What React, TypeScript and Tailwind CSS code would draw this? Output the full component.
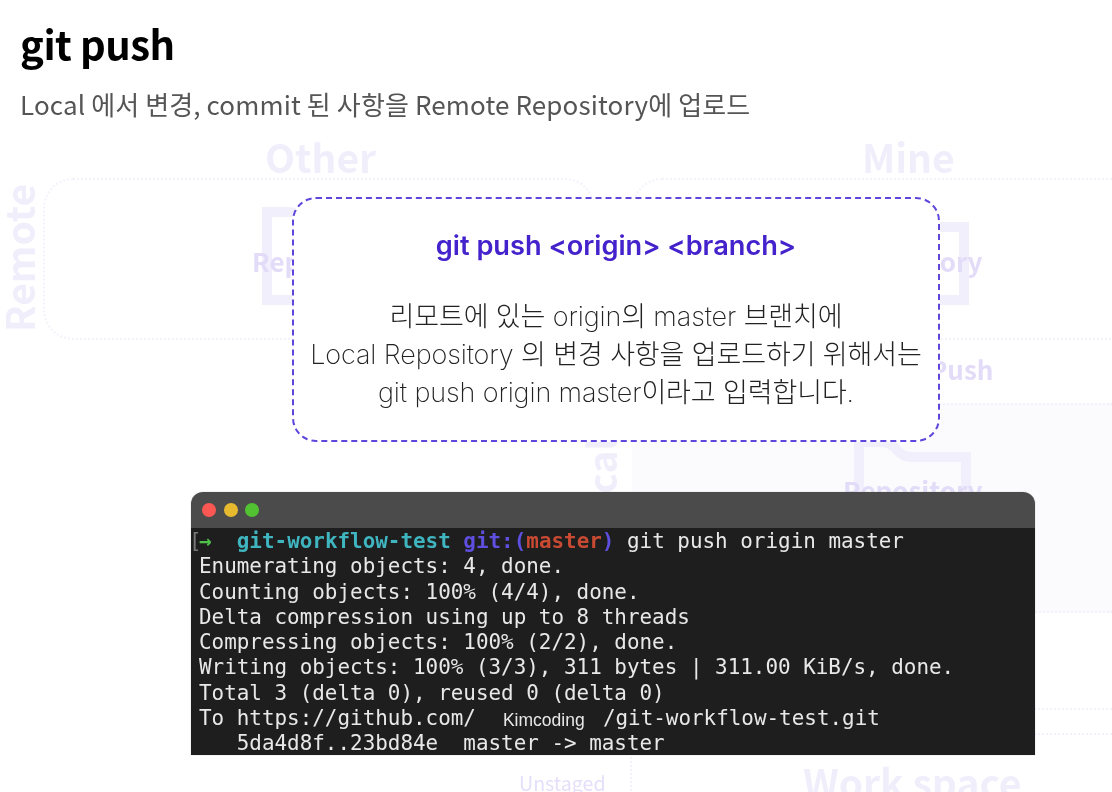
const cjk = "font-['Noto_Sans_CJK_KR','Noto_Sans',sans-serif]";

function Folder({ className }: { className: string }) {
  return (
    <svg className={className} viewBox="0 0 117 98" fill="none" stroke="#f2effc" strokeWidth="10">
      <path d="M5 93V5H26Q36 5 42 12Q48 20 58 20H112V93Z" />
    </svg>
  );
}

function Canvas() {
  const label = `absolute ${cjk} font-bold whitespace-nowrap`;
  return (
    <div className="absolute inset-0 overflow-hidden">
      <div className="absolute left-[43px] top-[178px] w-[552px] h-[162px] rounded-[30px] border-2 border-dotted border-[#f3f2fb]" />
      <div className="absolute left-[632px] top-[178px] w-[520px] h-[162px] rounded-[30px] border-2 border-dotted border-[#f3f2fb]" />
      <div className="absolute left-[632px] top-[403px] w-[480px] h-[210px] bg-[#fbfbfe] border-t-2 border-b-2 border-dotted border-[#f3f2fb]" />
      <div className="absolute left-[630px] top-[613px] w-[482px] h-[95px] border-l-2 border-dotted border-[#f3f2fb]" />
      <div className="absolute left-[630px] top-[708px] w-[482px] border-t-2 border-dotted border-[#f3f2fb]" />
      <div className="absolute left-[630px] top-[733px] w-[482px] h-[70px] border-t-2 border-l-2 border-dotted border-[#f3f2fb]" />

      <span className={`${label} left-[265px] top-[130px] text-[39px] leading-[52px] text-[#f1eefc]`}>Other</span>
      <span className={`${label} left-[862px] top-[130px] text-[39px] leading-[52px] text-[#f1eefc]`}>Mine</span>
      <span className={`${label} left-[803px] top-[755px] text-[39px] leading-[52px] text-[#f1eefc]`}>Work space</span>
      <span className={`${label} left-[-56px] top-[232px] w-[148px] text-center -rotate-90 text-[39px] leading-[52px] text-[#f1eefc]`}>Remote</span>
      <span className={`${label} left-[560px] top-[474px] w-[80px] text-center -rotate-90 text-[39px] leading-[52px] text-[#f1eefc]`}>Local</span>

      <Folder className="absolute left-[262px] top-[207px] w-[117px] h-[98px]" />
      <Folder className="absolute left-[852px] top-[207px] w-[117px] h-[98px]" />
      <Folder className="absolute left-[854px] top-[437px] w-[117px] h-[98px]" />

      <span className={`${label} left-[252px] top-[242px] text-[26px] leading-[38px] text-[#e3dcf8]`}>Repository</span>
      <span className={`${label} left-[843px] top-[242px] text-[26px] leading-[38px] text-[#e3dcf8]`}>Repository</span>
      <span className={`${label} left-[843px] top-[471px] text-[26px] leading-[38px] text-[#e3dcf8]`}>Repository</span>
      <span className={`${label} left-[930px] top-[350px] text-[26px] leading-[38px] text-[#e3dcf8]`}>Push</span>
      <span className={`absolute ${cjk} left-[519px] top-[769px] text-[19.6px] leading-[28px] text-[#e5dffa]`}>Unstaged</span>
    </div>
  );
}

function Terminal() {
  const lines = [
    "Enumerating objects: 4, done.",
    "Counting objects: 100% (4/4), done.",
    "Delta compression using up to 8 threads",
    "Compressing objects: 100% (2/2), done.",
    "Writing objects: 100% (3/3), 311 bytes | 311.00 KiB/s, done.",
    "Total 3 (delta 0), reused 0 (delta 0)",
  ];
  return (
    <div className="ml-[191px] mt-[50px] w-[844px] overflow-hidden rounded-t-xl shadow-[0_0_1px_#888]">
      <div className="h-9 bg-[#4b4b4b] flex items-center gap-[7.5px] pl-[11px]">
        <span className="w-[14px] h-[14px] rounded-full bg-[#fc5753]" />
        <span className="w-[14px] h-[14px] rounded-full bg-[#e6b92f]" />
        <span className="w-[14px] h-[14px] rounded-full bg-[#52c233]" />
      </div>
      <div className="h-[227px] overflow-hidden bg-[#1e1e1e] pl-2 pt-px font-['DejaVu_Sans_Mono',monospace] text-[20.92px] leading-[25.25px] text-[#e8e8e8] whitespace-pre">
        <div className="h-[25.25px]">
          <span className="-ml-[10px] -mr-[2.6px] text-[#777]">[</span>
          <span className="font-bold text-[#4fc04a]">→</span>
          {"  "}
          <span className="font-bold text-[#3fb5c0]">git-workflow-test</span>
          <span className="font-bold text-[#5f4fe0]"> git:(</span>
          <span className="font-bold text-[#c94a33]">master</span>
          <span className="font-bold text-[#5f4fe0]">)</span>
          {" git push origin master"}
        </div>
        {lines.map((l) => (
          <div key={l}>{l}</div>
        ))}
        <div className="flex h-[25.25px]">
          <span>To https://github.com/</span>
          <span className="w-[127px] pl-[27px] font-['Liberation_Sans',sans-serif] text-[17.5px] leading-[28px]">Kimcoding</span>
          <span>/git-workflow-test.git</span>
        </div>
        <div>{"   5da4d8f..23bd84e  master -> master"}</div>
      </div>
    </div>
  );
}

export default function App() {
  return (
    <div className="relative w-[1112px] h-[792px] overflow-hidden bg-white">
      <div className="absolute inset-0 blur-[0.4px]">
        <Canvas />
        <div className="relative">
          <header className={`pl-5 pt-[13px] ${cjk}`}>
            <h1 className="text-[40px] leading-[60px] font-bold text-black tracking-[-0.5px]">git push</h1>
            <p className="mt-[12px] text-[26px] leading-[38px] text-[#555] tracking-[0.13px]">
              Local 에서 변경, commit 된 사항을 Remote Repository에 업로드
            </p>
          </header>
          <section className="ml-[292px] mt-[74px] w-[648px] h-[245px] rounded-[24px] border-2 border-dashed border-[#5f45dc] bg-white text-center">
            <h2 className="mt-[29px] font-['Inter','Noto_Sans_CJK_KR',sans-serif] text-[27.2px] leading-[36px] font-semibold text-[#4422cc]">
              git push &lt;origin&gt; &lt;branch&gt;
            </h2>
            <p className="mt-[34px] font-['Inter','Noto_Sans_CJK_KR',sans-serif] text-[27px] leading-[38px] font-extralight text-[#222] tracking-[-0.12px]">
              리모트에 있는 origin의 master 브랜치에
              <br />
              Local Repository 의 변경 사항을 업로드하기 위해서는
              <br />
              git push origin master이라고 입력합니다.
            </p>
          </section>
          <Terminal />
        </div>
      </div>
    </div>
  );
}
